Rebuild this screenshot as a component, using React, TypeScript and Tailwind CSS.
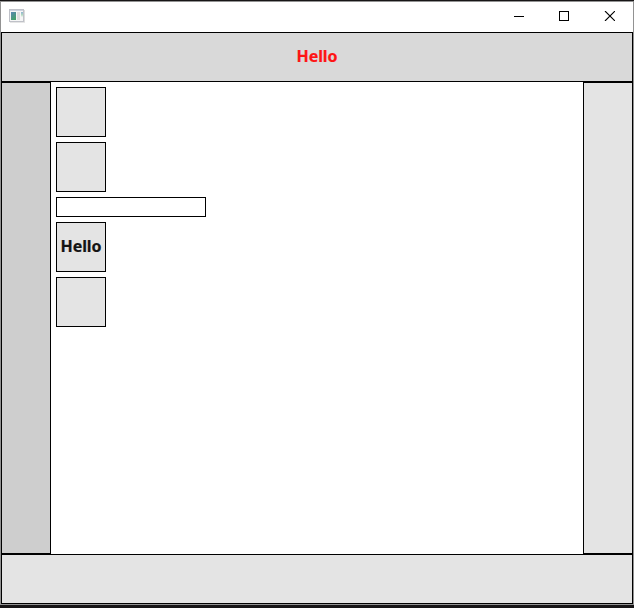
import React from "react";

function AppIcon() {
  return (
    <svg width="16" height="14" viewBox="0 0 16 14" shapeRendering="crispEdges">
      <defs>
        <linearGradient id="pane" x1="0" y1="0" x2="0.5" y2="1">
          <stop offset="0" stopColor="#5a86b4" />
          <stop offset="1" stopColor="#45a06c" />
        </linearGradient>
        <linearGradient id="side" x1="0" y1="0" x2="0" y2="1">
          <stop offset="0" stopColor="#8fb4d4" />
          <stop offset="0.6" stopColor="#b4dcc0" />
          <stop offset="1" stopColor="#f4f4f4" />
        </linearGradient>
      </defs>
      <rect width="15" height="13" fill="#bfc1c8" />
      <rect x="15" y="1" width="1" height="12" fill="#dcdcdc" />
      <rect x="1" y="13" width="15" height="1" fill="#e6e6e6" />
      <rect x="1" y="1" width="13" height="1" fill="#ccd2de" />
      <rect x="1" y="2" width="13" height="10" fill="#f6f6f6" />
      <rect x="2" y="3" width="5" height="8" fill="url(#pane)" />
      <rect x="8" y="3" width="3" height="8" fill="#dedede" />
      <rect x="12" y="3" width="2" height="5" fill="url(#side)" />
    </svg>
  );
}

function TitleBar() {
  return (
    <div className="flex h-[30px] shrink-0 items-start bg-white pl-2 pt-[7px]">
      <AppIcon />
      <div className="ml-auto flex gap-[35px] pr-[18px] pt-0.5">
        <svg width="10" height="10" shapeRendering="crispEdges">
          <rect y="5" width="10" height="1" />
        </svg>
        <svg width="10" height="10" shapeRendering="crispEdges">
          <rect x="0.5" y="0.5" width="9" height="9" fill="none" stroke="black" />
        </svg>
        <svg width="11" height="10" viewBox="0 0 11 10">
          <path d="M1 0L11 10M11 0L1 10" stroke="black" strokeWidth="1.1" fill="none" />
        </svg>
      </div>
    </div>
  );
}

function Tile({ children }: { children?: React.ReactNode }) {
  return (
    <div className="flex size-[50px] shrink-0 items-center justify-center border border-black bg-[#e4e4e4]">
      {children}
    </div>
  );
}

function Label({ className, children }: { className: string; children: React.ReactNode }) {
  return (
    <span
      className={`pb-0.5 font-['Noto_Sans',sans-serif] text-base font-bold leading-4 tracking-[-0.1px] [-webkit-text-stroke:0.2px_currentColor] ${className}`}
    >
      {children}
    </span>
  );
}

export default function App() {
  return (
    <div className="flex h-[608px] w-[634px] flex-col bg-[#171516] pb-[3px] pt-px">
      <div className="flex flex-1 flex-col border border-[#929292]">
        <TitleBar />
        <header className="flex h-[50px] shrink-0 items-center justify-center border border-black bg-[#d9d9d9]">
          <Label className="text-[#ff1414]">Hello</Label>
        </header>
        <div className="flex flex-1">
          <aside className="w-[50px] border border-black bg-[#cecece]" />
          <main className="flex flex-1 flex-col gap-[5px] bg-white p-[5px]">
            <Tile />
            <Tile />
            <input className="h-5 w-[150px] border border-black bg-white px-1 outline-none" />
            <Tile>
              <Label className="text-[#141414]">Hello</Label>
            </Tile>
            <Tile />
          </main>
          <aside className="w-[50px] border border-black bg-[#e4e4e4]" />
        </div>
        <footer className="h-[50px] shrink-0 border border-black bg-[#e4e4e4]" />
      </div>
    </div>
  );
}
